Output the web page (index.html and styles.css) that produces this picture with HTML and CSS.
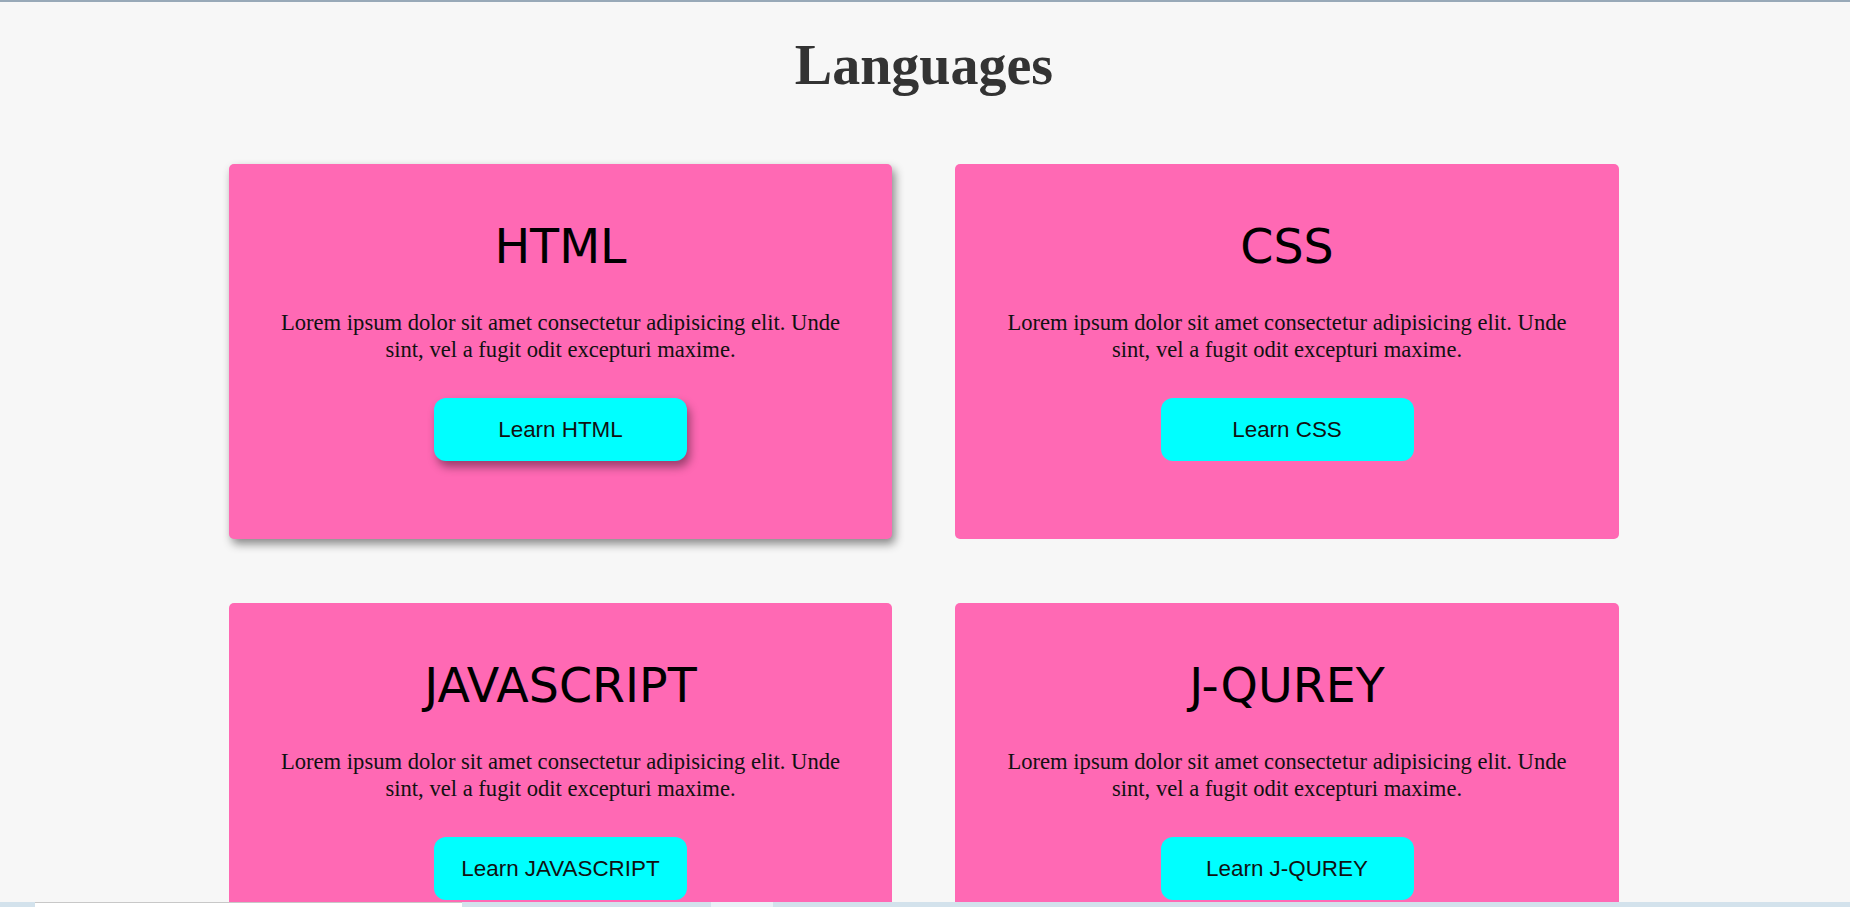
FILE: index.html
```html
<!DOCTYPE html>
<html lang="en">
<head>
<meta charset="UTF-8">
<title>Languages</title>
<link rel="stylesheet" href="styles.css">
</head>
<body>
  <main class="page">
    <h1 class="title">Languages</h1>
    <section class="grid">
      <article class="card card--active">
        <h2 class="card__title">HTML</h2>
        <p class="card__text">Lorem ipsum dolor sit amet consectetur adipisicing elit. Unde sint, vel a fugit odit excepturi maxime.</p>
        <a class="card__btn card__btn--active" href="#">Learn HTML</a>
      </article>
      <article class="card">
        <h2 class="card__title">CSS</h2>
        <p class="card__text">Lorem ipsum dolor sit amet consectetur adipisicing elit. Unde sint, vel a fugit odit excepturi maxime.</p>
        <a class="card__btn" href="#">Learn CSS</a>
      </article>
      <article class="card">
        <h2 class="card__title">JAVASCRIPT</h2>
        <p class="card__text">Lorem ipsum dolor sit amet consectetur adipisicing elit. Unde sint, vel a fugit odit excepturi maxime.</p>
        <a class="card__btn" href="#">Learn JAVASCRIPT</a>
      </article>
      <article class="card">
        <h2 class="card__title">J-QUREY</h2>
        <p class="card__text">Lorem ipsum dolor sit amet consectetur adipisicing elit. Unde sint, vel a fugit odit excepturi maxime.</p>
        <a class="card__btn" href="#">Learn J-QUREY</a>
      </article>
    </section>
  </main>
  <div class="taskbar">
    <div class="taskbar__field"></div>
    <div class="taskbar__tab"></div>
  </div>
</body>
</html>
```
FILE: styles.css
```css
html, body {
  margin: 0;
  padding: 0;
}

body {
  background: #f7f7f7;
  border-top: 2px solid #98a9b8;
  font-family: "Liberation Serif", "Times New Roman", serif;
  overflow: hidden;
  height: 905px;
}

.page {
  display: flex;
  flex-direction: column;
  align-items: center;
  padding-right: 2px;
}

.title {
  margin: 31px 0 0;
  font-family: "Liberation Serif", "Times New Roman", serif;
  font-weight: 700;
  font-size: 56px;
  line-height: 64px;
  color: #333333;
  text-align: center;
}

.grid {
  margin-top: 67px;
  width: 1390px;
  display: grid;
  grid-template-columns: 663px 664px;
  column-gap: 63px;
  row-gap: 64px;
}

.card {
  background: #ff69b4;
  border-radius: 5px;
  height: 375px;
  box-sizing: border-box;
  padding: 50px 46px 0;
  display: flex;
  flex-direction: column;
  align-items: center;
  text-align: center;
}

.card--active {
  box-shadow: 3px 5px 10px rgba(0, 0, 0, 0.45);
}

.card__title {
  margin: 0;
  font-family: "DejaVu Sans", "Noto Sans", sans-serif;
  font-weight: 400;
  font-size: 47.5px;
  line-height: 65px;
  color: #000;
}

.card__text {
  margin: 30px 0 0;
  font-family: "Liberation Serif", "Times New Roman", serif;
  font-size: 22.6px;
  line-height: 27px;
  color: #111;
}

.card__btn {
  margin-top: 35px;
  width: 253px;
  height: 63px;
  box-sizing: border-box;
  display: flex;
  align-items: center;
  justify-content: center;
  background: #00ffff;
  border-radius: 12px;
  font-family: "Liberation Sans", Arial, sans-serif;
  font-size: 22.4px;
  color: #111;
  text-decoration: none;
}

.card__btn--active {
  box-shadow: 3px 6px 10px rgba(0, 0, 0, 0.4);
}

.taskbar {
  position: fixed;
  left: 0;
  right: 0;
  bottom: 0;
  height: 5px;
  background: #d3e2ec;
  display: flex;
}

.taskbar__field {
  margin-left: 35px;
  width: 427px;
  background: #ffffff;
  border-top: 1px solid #c8c8c8;
}

.taskbar__tab {
  margin-left: 249px;
  width: 62px;
  background: #eaf1f7;
}
```
